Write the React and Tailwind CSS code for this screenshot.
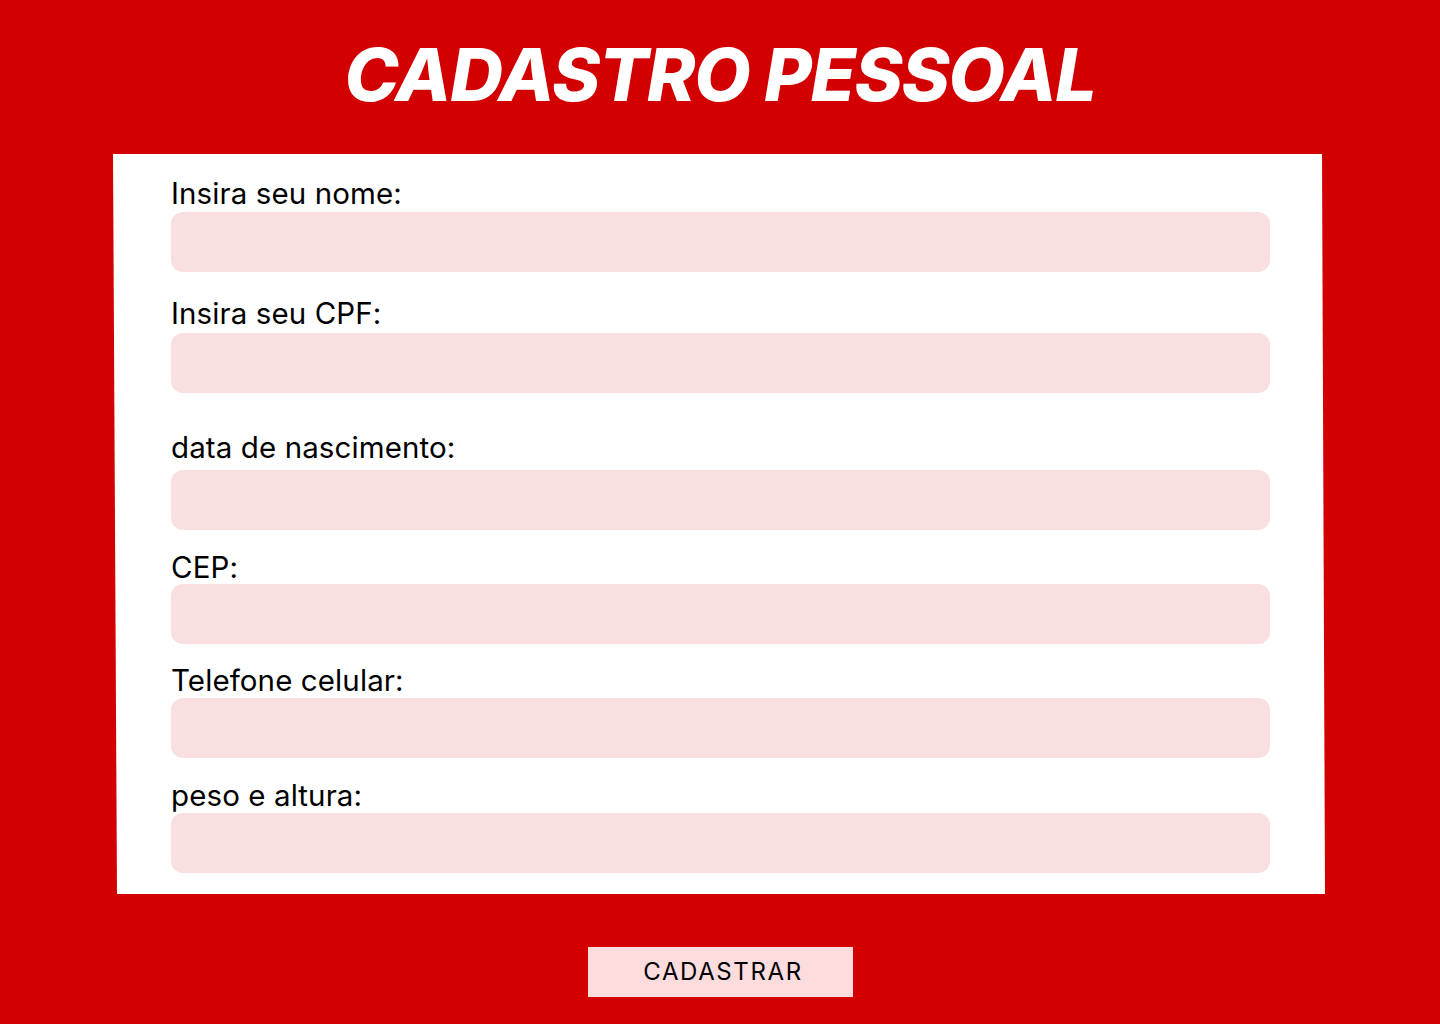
const fields = [
  { label: "Insira seu nome:", labelTop: "mt-0", inputTop: "mt-[2px]" },
  { label: "Insira seu CPF:", labelTop: "mt-[24px]", inputTop: "mt-[3px]" },
  { label: "data de nascimento:", labelTop: "mt-[37px]", inputTop: "mt-[6px]" },
  { label: "CEP:", labelTop: "mt-[20px]", inputTop: "mt-0" },
  { label: "Telefone celular:", labelTop: "mt-[19px]", inputTop: "mt-[1px]" },
  { label: "peso e altura:", labelTop: "mt-[20px]", inputTop: "mt-[1px]" },
];

const Field = ({ label, labelTop, inputTop }) => (
  <div className="flex flex-col">
    <label className={`${labelTop} block text-[29.5px] leading-[34px] tracking-[0.1px] text-black`}>{label}</label>
    <input
      type="text"
      className={`${inputTop} h-[60px] w-[1099px] rounded-[12px] bg-[#fadfe0] px-4 text-[24px] outline-none`}
    />
  </div>
);

export default function App() {
  return (
    <div className="min-h-screen w-full bg-[#d20000] font-['Inter','Liberation_Sans',sans-serif] pt-[38px] pb-[27px]">
      <h1 className="text-center text-[73px] font-extrabold italic leading-[74px] text-white tracking-[-1.2px]">
        CADASTRO PESSOAL
      </h1>

      <form className="mt-[42px] ml-[113px] w-[1212px] bg-white pt-[22px] pb-[21px] pl-[58px] [clip-path:polygon(0_0,1209px_0,100%_100%,4px_100%)]">
        {fields.map((f) => (
          <Field key={f.label} {...f} />
        ))}
      </form>

      <div className="mt-[53px] flex justify-center">
        <button
          type="button"
          className="h-[50px] w-[265px] bg-[#fddcdd] pl-[6px] text-[24px] tracking-[1.6px] text-black"
        >
          CADASTRAR
        </button>
      </div>
    </div>
  );
}
